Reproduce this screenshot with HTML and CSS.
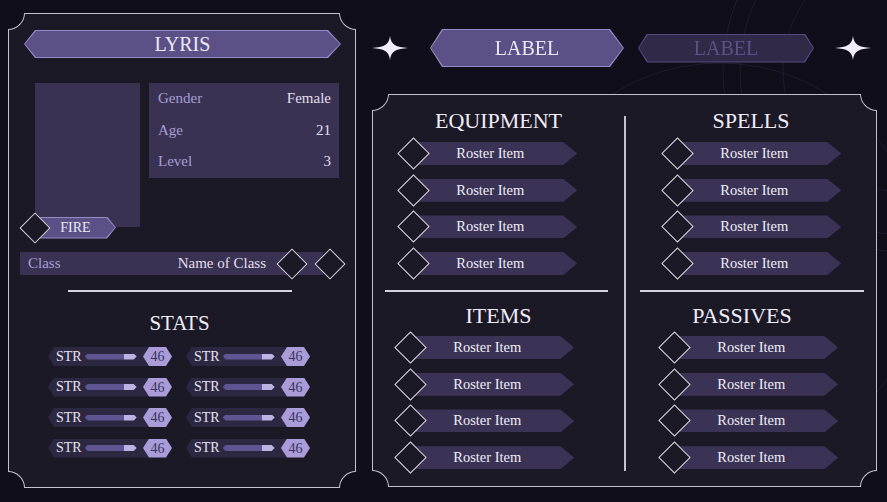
FILE: index.html
```html
<!DOCTYPE html>
<html lang="en">
<head>
    <meta charset="UTF-8">
    <meta name="viewport" content="width=device-width, initial-scale=1.0">
    <title>Character Sheet</title>
    <link rel="stylesheet" href="styles.css">
</head>
<body>
    <svg class="backdrop" width="887" height="502" viewBox="0 0 887 502">
        <circle cx="905" cy="70" r="182" />
        <circle cx="905" cy="70" r="165" />
        <circle cx="905" cy="70" r="122" />
        <circle cx="720" cy="265" r="202" />
    </svg>

    <div class="page">
        <section class="sheet">
            <span class="notch tl"></span>
            <span class="notch tr"></span>
            <span class="notch bl"></span>
            <span class="notch br"></span>

            <div class="name-banner">LYRIS</div>

            <div class="profile">
                <div class="portrait">
                    <div class="element-tag">
                        <span class="gem"></span>
                        <span class="tag">FIRE</span>
                    </div>
                </div>
                <div class="info">
                    <div class="info-row"><span>Gender</span><span class="val">Female</span></div>
                    <div class="info-row"><span>Age</span><span class="val">21</span></div>
                    <div class="info-row"><span>Level</span><span class="val">3</span></div>
                </div>
            </div>

            <div class="class-row">
                <div class="class-bar"><span>Class</span><span class="val">Name of Class</span></div>
                <span class="gem"></span>
                <span class="gem second"></span>
            </div>

            <div class="rule"></div>

            <h2 class="stats-title">STATS</h2>
            <div class="stats">
                <div class="stat"><div class="stat-body">STR<span class="meter"></span></div><span class="stat-val">46</span></div>
                <div class="stat"><div class="stat-body">STR<span class="meter"></span></div><span class="stat-val">46</span></div>
                <div class="stat"><div class="stat-body">STR<span class="meter"></span></div><span class="stat-val">46</span></div>
                <div class="stat"><div class="stat-body">STR<span class="meter"></span></div><span class="stat-val">46</span></div>
                <div class="stat"><div class="stat-body">STR<span class="meter"></span></div><span class="stat-val">46</span></div>
                <div class="stat"><div class="stat-body">STR<span class="meter"></span></div><span class="stat-val">46</span></div>
                <div class="stat"><div class="stat-body">STR<span class="meter"></span></div><span class="stat-val">46</span></div>
                <div class="stat"><div class="stat-body">STR<span class="meter"></span></div><span class="stat-val">46</span></div>
            </div>
        </section>

        <div class="right">
            <div class="tabs">
                <svg class="spark" width="36" height="24" viewBox="0 0 36 24"><path d="M18 0 C19 9 24 11 36 12 C24 13 19 15 18 24 C17 15 12 13 0 12 C12 11 17 9 18 0Z" /></svg>
                <div class="tab active">LABEL</div>
                <div class="tab">LABEL</div>
                <svg class="spark" width="36" height="24" viewBox="0 0 36 24"><path d="M18 0 C19 9 24 11 36 12 C24 13 19 15 18 24 C17 15 12 13 0 12 C12 11 17 9 18 0Z" /></svg>
            </div>

            <section class="board">
                <span class="notch tl"></span>
                <span class="notch tr"></span>
                <span class="notch bl"></span>
                <span class="notch br"></span>

                <div class="col first">
                    <div class="group">
                        <h3>EQUIPMENT</h3>
                        <ul class="roster">
                            <li><span class="gem"></span><span class="item">Roster Item</span></li>
                            <li><span class="gem"></span><span class="item">Roster Item</span></li>
                            <li><span class="gem"></span><span class="item">Roster Item</span></li>
                            <li><span class="gem"></span><span class="item">Roster Item</span></li>
                        </ul>
                    </div>
                    <div class="col-rule"></div>
                    <div class="group lower">
                        <h3>ITEMS</h3>
                        <ul class="roster">
                            <li><span class="gem"></span><span class="item">Roster Item</span></li>
                            <li><span class="gem"></span><span class="item">Roster Item</span></li>
                            <li><span class="gem"></span><span class="item">Roster Item</span></li>
                            <li><span class="gem"></span><span class="item">Roster Item</span></li>
                        </ul>
                    </div>
                </div>

                <div class="vline"></div>

                <div class="col second">
                    <div class="group">
                        <h3>SPELLS</h3>
                        <ul class="roster">
                            <li><span class="gem"></span><span class="item">Roster Item</span></li>
                            <li><span class="gem"></span><span class="item">Roster Item</span></li>
                            <li><span class="gem"></span><span class="item">Roster Item</span></li>
                            <li><span class="gem"></span><span class="item">Roster Item</span></li>
                        </ul>
                    </div>
                    <div class="col-rule"></div>
                    <div class="group lower">
                        <h3 class="shifted">PASSIVES</h3>
                        <ul class="roster">
                            <li><span class="gem"></span><span class="item">Roster Item</span></li>
                            <li><span class="gem"></span><span class="item">Roster Item</span></li>
                            <li><span class="gem"></span><span class="item">Roster Item</span></li>
                            <li><span class="gem"></span><span class="item">Roster Item</span></li>
                        </ul>
                    </div>
                </div>
            </section>
        </div>
    </div>
</body>
</html>
```

FILE: styles.css
```css
body {
    margin: 0;
    width: 887px;
    height: 502px;
    overflow: hidden;
    background: #100e1a;
    font-family: "Liberation Serif", serif;
    color: #ece8f4;
}

.backdrop { position: fixed; left: 0; top: 0; z-index: 0; }
.backdrop circle { fill: none; stroke: #2a2540; stroke-width: 1; opacity: 0.6; }

.page {
    position: relative;
    z-index: 1;
    display: flex;
    gap: 16px;
    padding: 13px 0 0 8px;
}

/* framed panels with cut-in corners */
.sheet, .board {
    position: relative;
    box-sizing: border-box;
    background: #1c1927;
    border: 1px solid #c6c1d0;
}
.notch {
    position: absolute;
    box-sizing: border-box;
    width: 17px;
    height: 17px;
    background: #100e1a;
    border: 0 solid #c6c1d0;
    z-index: 2;
}
.notch.tl { top: -1px; left: -1px; border-right-width: 1px; border-bottom-width: 1px; border-bottom-right-radius: 17px; }
.notch.tr { top: -1px; right: -1px; border-left-width: 1px; border-bottom-width: 1px; border-bottom-left-radius: 17px; }
.notch.bl { bottom: -1px; left: -1px; border-right-width: 1px; border-top-width: 1px; border-top-right-radius: 17px; }
.notch.br { bottom: -1px; right: -1px; border-left-width: 1px; border-top-width: 1px; border-top-left-radius: 17px; }

/* hexagon banners: outer = border colour, ::before = fill */
.name-banner, .tab, .tag {
    position: relative;
    isolation: isolate;
    display: flex;
    align-items: center;
    justify-content: center;
    box-sizing: border-box;
    background: #958bc6;
}
.name-banner::before, .tab::before, .tag::before {
    content: "";
    position: absolute;
    inset: 1px;
    z-index: -1;
    background: #5b5187;
    clip-path: inherit;
}

.gem {
    flex: none;
    position: relative;
    z-index: 1;
    box-sizing: border-box;
    width: 22px;
    height: 22px;
    background: #1c1927;
    border: 1.5px solid #ddd9e6;
    transform: rotate(45deg);
}

/* left sheet */
.sheet { width: 348px; height: 475px; }

.name-banner {
    margin: 16px 0 0 15px;
    width: 317px;
    height: 28px;
    font-size: 20px;
    clip-path: polygon(11px 0, calc(100% - 13px) 0, 100% 50%, calc(100% - 13px) 100%, 11px 100%, 0 50%);
}

.profile {
    display: flex;
    gap: 9px;
    margin-top: 25px;
    padding-left: 26px;
}
.portrait {
    position: relative;
    width: 105px;
    height: 144px;
    background: #393252;
}
.element-tag {
    position: absolute;
    left: -16px;
    top: 129px;
    display: flex;
    align-items: center;
    height: 31px;
}
.element-tag .gem { margin-left: 4.5px; }
.tag {
    width: 81px;
    height: 22px;
    margin-left: -10.5px;
    padding: 0 9px;
    font-size: 14px;
    clip-path: polygon(0 0, calc(100% - 9px) 0, 100% 50%, calc(100% - 9px) 100%, 0 100%);
}

.info {
    box-sizing: border-box;
    width: 190px;
    height: 95px;
    padding: 0 8px 0 9px;
    background: #393252;
    font-size: 15px;
    color: #a99fd6;
}
.info-row {
    display: flex;
    justify-content: space-between;
    height: 31.5px;
    line-height: 31.5px;
}
.val { color: #e3dfed; }

.class-row {
    display: flex;
    align-items: center;
    height: 23px;
    margin: 25px 0 0 11px;
}
.class-bar {
    box-sizing: border-box;
    display: flex;
    justify-content: space-between;
    align-items: center;
    width: 303px;
    height: 23px;
    padding: 0 57px 0 8px;
    background: #393252;
    font-size: 15px;
    color: #a99fd6;
}
.class-row .gem { margin-left: -42px; }
.class-row .gem.second { margin-left: 15.5px; }

.rule {
    width: 224px;
    height: 2px;
    margin: 15px 0 0 59px;
    background: #d6d2e0;
}

.stats-title {
    margin: 19px 0 0;
    padding-right: 5px;
    font-size: 21px;
    font-weight: normal;
    line-height: 25px;
    text-align: center;
    color: #f1edf7;
}

.stats {
    display: grid;
    grid-template-columns: 124px 124px;
    gap: 11.5px 14px;
    margin: 11px 0 0 39px;
}
.stat { display: flex; align-items: center; height: 19px; }
.stat-body {
    box-sizing: border-box;
    display: flex;
    align-items: center;
    width: 102px;
    height: 19px;
    padding-left: 8px;
    background: #2d2842;
    font-size: 14px;
    color: #e6e2f0;
    clip-path: polygon(6px 0, 100% 0, 100% 100%, 6px 100%, 0 50%);
}
.meter {
    width: 52px;
    height: 6px;
    margin-left: 3px;
    background: linear-gradient(90deg, #5f5592 0 75%, #bcb2e4 75%);
    clip-path: polygon(3px 0, calc(100% - 3px) 0, 100% 50%, calc(100% - 3px) 100%, 3px 100%, 0 50%);
}
.stat-val {
    width: 29px;
    height: 19px;
    margin-left: -7px;
    background: #a99cd9;
    font-size: 14px;
    line-height: 19px;
    text-align: center;
    color: #3b335c;
    clip-path: polygon(6px 0, calc(100% - 6px) 0, 100% 50%, calc(100% - 6px) 100%, 6px 100%, 0 50%);
}

/* right side */
.right { display: flex; flex-direction: column; }

.tabs {
    display: flex;
    align-items: center;
    height: 38px;
    margin-top: 16px;
}
.spark { flex: none; }
.spark path { fill: #f1edf9; }
.tab {
    font-size: 20px;
    width: 194px;
    height: 38px;
    margin-left: 22px;
    clip-path: polygon(12px 0, calc(100% - 14px) 0, 100% 50%, calc(100% - 14px) 100%, 12px 100%, 0 50%);
}
.tab:not(.active) {
    width: 176px;
    height: 29px;
    margin-left: 14px;
    background: #554b7f;
    color: #5b5286;
    clip-path: polygon(9px 0, calc(100% - 9px) 0, 100% 50%, calc(100% - 9px) 100%, 9px 100%, 0 50%);
}
.tab:not(.active)::before { background: #302a48; }
.tabs .spark:last-child { margin-left: 21px; }

.board {
    display: flex;
    width: 505px;
    height: 393px;
    margin-top: 27px;
}
.col { box-sizing: border-box; }
.col.first { width: 251px; }
.col.second { width: 250px; }
.vline {
    width: 2px;
    margin: 21px 0 15px;
    background: #c6c1d0;
}

.group h3 {
    margin: 13px 0 0;
    font-size: 22px;
    font-weight: normal;
    line-height: 26px;
    text-align: center;
    color: #f1edf7;
}
.group.lower h3 { margin-top: 11px; }
.group h3.shifted { padding-right: 18px; }

.roster {
    list-style: none;
    margin: 3px 0 0;
    padding: 0 0 0 24px;
}
.group.lower .roster { margin-top: 2px; padding-left: 21px; }
.col.second .roster { padding-left: 35px; }
.col.second .group.lower .roster { padding-left: 32px; }

.roster li {
    display: flex;
    align-items: center;
    height: 33px;
    margin-bottom: 3.7px;
}
.roster li:last-child { margin-bottom: 0; }
.roster .gem { width: 23px; height: 23px; margin-left: 5px; }
.item {
    box-sizing: border-box;
    width: 164px;
    height: 23px;
    margin-left: -11.75px;
    padding: 0 14px 0 4px;
    display: flex;
    align-items: center;
    justify-content: center;
    background: #3a3356;
    font-size: 14.5px;
    color: #f1edf7;
    clip-path: polygon(0 0, calc(100% - 14px) 0, 100% 50%, calc(100% - 14px) 100%, 0 100%);
}

.col-rule {
    width: 223px;
    height: 2px;
    margin: 10px 0 0 12px;
    background: #d6d2e0;
}
.col.second .col-rule { width: 224px; margin-left: 14px; }
```
